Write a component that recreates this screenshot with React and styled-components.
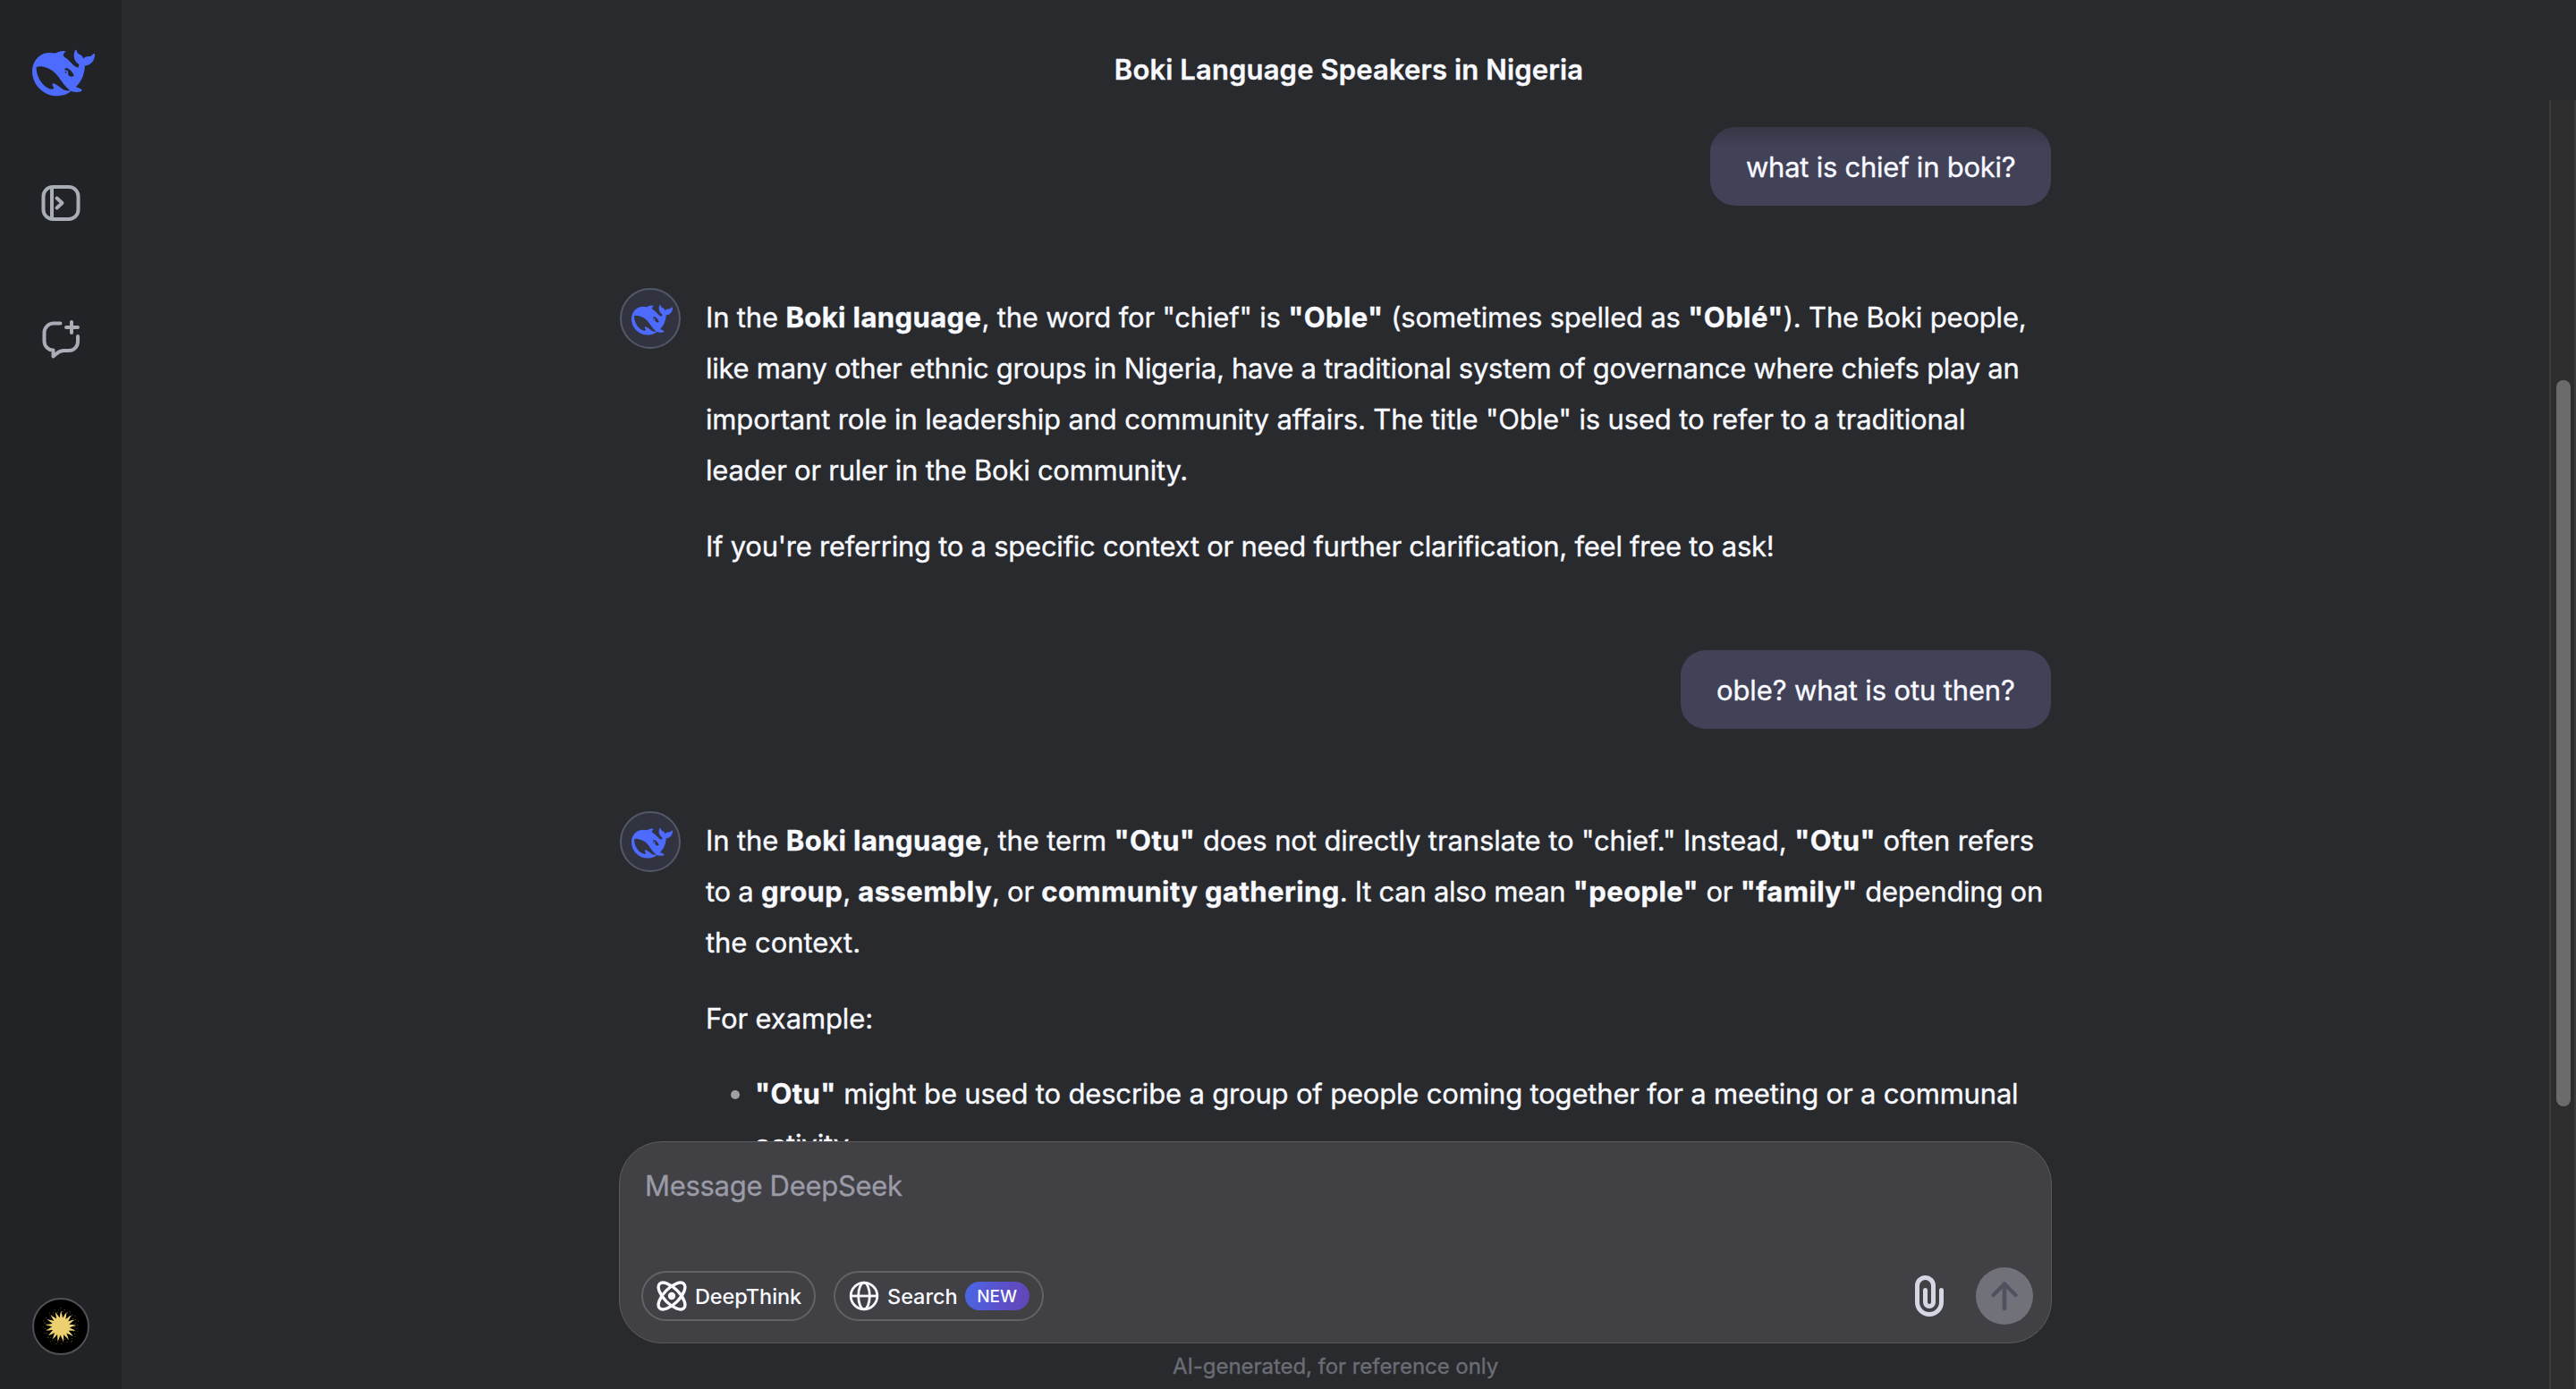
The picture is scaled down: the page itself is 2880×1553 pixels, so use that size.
import React from "react";
import styled, { createGlobalStyle } from "styled-components";

const GlobalStyle = createGlobalStyle`
	* {
		box-sizing: border-box;
	}

	body {
		margin: 0;
		background: #292a2d;
		font-family: Inter, "Liberation Sans", sans-serif;
		color: #f8faff;
		-webkit-text-stroke: 0.35px;
	}
`;

const Page = styled.div`
	display: flex;
	width: 100vw;
	height: 100vh;
	overflow: hidden;
`;

const Sidebar = styled.nav`
	display: flex;
	flex-direction: column;
	align-items: center;
	flex: 0 0 136px;
	padding: 46px 0 38px;
	background: #212327;

	svg {
		display: block;
	}
`;

const Logo = styled.div`
	padding: 1px 0 0 6px;
`;

const SideButton = styled.button`
	display: block;
	padding: 0;
	border: 0;
	background: none;
	color: #a9adb5;
	margin-top: ${props => props.$gap}px;
`;

const UserAvatar = styled.div`
	width: 64px;
	height: 64px;
	margin-top: auto;
	border: 2px solid #505154;
	border-radius: 50%;
	background: #000;
	overflow: hidden;
`;

const Main = styled.main`
	display: flex;
	flex-direction: column;
	flex: 1;
	min-width: 0;
`;

const Header = styled.header`
	position: relative;
	display: flex;
	justify-content: center;
	flex: 0 0 112px;
	padding-top: 58px;

	&::after {
		content: "";
		position: absolute;
		top: 112px;
		left: 0;
		right: 30px;
		height: 54px;
		background: linear-gradient(#292a2d, rgba(41, 42, 45, 0));
	}
`;

const Title = styled.h1`
	margin: 0;
	font-size: 31px;
	line-height: 40px;
	font-weight: 600;
	letter-spacing: ${props => props.$track}px;
	white-space: nowrap;
`;

const Body = styled.div`
	display: flex;
	flex: 1;
	min-height: 0;
`;

const Column = styled.div`
	display: flex;
	flex-direction: column;
	width: 1602px;
	margin: 0 auto;
`;

const Thread = styled.div`
	display: flex;
	flex-direction: column;
	flex: 1;
	min-height: 0;
	padding: 30px 1px 0;
	overflow: hidden;
`;

const Bubble = styled.div`
	flex: none;
	align-self: flex-end;
	width: ${props => props.$width}px;
	height: 88px;
	padding: 0 40px;
	border-radius: 28px;
	background: #414158;
	font-size: 31px;
	line-height: 90px;
	letter-spacing: ${props => props.$track}px;
	white-space: nowrap;
`;

const Answer = styled.div`
	display: flex;
	align-items: flex-start;
	flex: none;
	gap: 28px;
	margin: 92px 0 88px;
`;

const BotAvatar = styled.div`
	display: flex;
	align-items: center;
	justify-content: center;
	flex: 0 0 68px;
	height: 68px;
	padding: 3px 0 0 4px;
	border: 2px solid #525967;
	border-radius: 50%;
	background: #313340;
`;

const Content = styled.div`
	padding-top: 4px;
	font-size: 31px;
	line-height: 57px;

	p {
		margin: 0 0 28px;
	}

	p:last-child {
		margin: 0;
	}

	b {
		font-weight: 700;
		letter-spacing: 0.4px;
	}
`;

const Line = styled.span`
	display: block;
	letter-spacing: ${props => props.$track}px;
	white-space: nowrap;
`;

const Bullets = styled.ul`
	margin: -1px 0 0;
	padding: 0;
	list-style: none;

	li {
		display: flex;
		gap: 17px;
		padding-left: 28px;
	}

	li::before {
		content: "";
		width: 10px;
		height: 10px;
		margin-top: 25px;
		border-radius: 50%;
		background: #a0a0a2;
	}
`;

const Composer = styled.div`
	display: flex;
	flex-direction: column;
	justify-content: space-between;
	flex: 0 0 226px;
	padding: 26px 20px 24px 24px;
	border: 1px solid #5a5a5f;
	border-radius: 48px;
	background: #404045;
`;

const Placeholder = styled.div`
	padding-left: 4px;
	font-size: 31px;
	line-height: 46px;
	letter-spacing: ${props => props.$track}px;
	color: #9a9ba6;
`;

const Tools = styled.div`
	display: flex;
	align-items: center;
	height: 56px;
`;

const Chip = styled.button`
	display: flex;
	align-items: center;
	width: ${props => props.$width}px;
	height: 56px;
	margin-right: 20px;
	padding: 0 14px 0 15px;
	border: 2px solid #626366;
	border-radius: 28px;
	background: none;
	color: #f8faff;
	font-family: inherit;
	font-size: 23.5px;
	font-weight: 500;
	letter-spacing: ${props => props.$track}px;
	white-space: nowrap;
	-webkit-text-stroke: 0;

	svg {
		flex: none;
		margin-right: 9px;
	}
`;

const NewBadge = styled.span`
	flex: none;
	width: 72px;
	height: 32px;
	margin-left: 8px;
	border-radius: 16px;
	background: linear-gradient(100deg, #4a67e6, #5c4fc8 60%, #6345b4);
	font-size: 19px;
	line-height: 33px;
	text-align: center;
	letter-spacing: 0;
`;

const AttachButton = styled.button`
	display: block;
	margin-left: auto;
	margin-right: 36px;
	padding: 0;
	border: 0;
	background: none;
	color: #d5d8e4;

	svg {
		display: block;
	}
`;

const SendButton = styled.button`
	display: flex;
	flex: none;
	align-items: center;
	justify-content: center;
	width: 64px;
	height: 64px;
	padding: 0;
	border: 0;
	border-radius: 50%;
	background: #71717a;
	color: #50505f;
`;

const Disclaimer = styled.div`
	flex: 0 0 51px;
	padding-top: 11px;
	font-size: 24px;
	line-height: 30px;
	text-align: center;
	letter-spacing: ${props => props.$track}px;
	color: #6b6d75;
`;

const ScrollRail = styled.div`
	flex: 0 0 30px;
	padding: 313px 4px 0 6px;
	border-left: 2px solid #3b3b3b;
	border-right: 2px solid #3b3b3b;
	background: #2d2d2d;
`;

const ScrollThumb = styled.div`
	width: 16px;
	height: 812px;
	border-radius: 8px;
	background: #6b6b6b;
`;

const Whale = ({ size }) => (
	<svg width={size} height={size} viewBox="0 0 24 24" fill="#4d6bfe">
		<path d="M23.748 4.482c-.254-.124-.364.113-.512.234-.051.039-.094.09-.137.136-.372.397-.806.657-1.373.626-.829-.046-1.537.214-2.163.848-.133-.782-.575-1.248-1.247-1.548-.352-.156-.708-.311-.955-.65-.172-.241-.219-.51-.305-.774-.055-.16-.11-.323-.293-.35-.2-.031-.278.136-.356.276-.313.572-.434 1.202-.422 1.84.027 1.436.633 2.58 1.838 3.393.137.093.172.187.129.323-.082.28-.18.552-.266.833-.055.179-.137.217-.329.14a5.526 5.526 0 01-1.736-1.18c-.857-.828-1.631-1.742-2.597-2.458a11.365 11.365 0 00-.689-.471c-.985-.957.13-1.743.388-1.836.27-.098.093-.432-.779-.428-.872.004-1.67.295-2.687.684a3.055 3.055 0 01-.465.137 9.597 9.597 0 00-2.883-.102c-1.885.21-3.39 1.102-4.497 2.623C.082 8.606-.231 10.684.152 12.85c.403 2.284 1.569 4.175 3.36 5.653 1.858 1.533 3.997 2.284 6.438 2.14 1.482-.085 3.133-.284 4.994-1.86.47.234.962.327 1.78.397.63.059 1.236-.03 1.705-.128.735-.156.684-.837.419-.961-2.155-1.004-1.682-.595-2.113-.926 1.096-1.296 2.746-2.642 3.392-7.003.05-.347.007-.565 0-.845-.004-.17.035-.237.23-.256a4.173 4.173 0 001.545-.475c1.396-.763 1.96-2.015 2.093-3.517.02-.23-.004-.467-.247-.588zM11.581 18c-2.089-1.642-3.102-2.183-3.52-2.16-.392.024-.321.471-.235.763.09.288.207.486.371.739.114.167.192.416-.113.603-.673.416-1.842-.14-1.897-.167-1.361-.802-2.5-1.86-3.301-3.307-.774-1.393-1.224-2.887-1.298-4.482-.02-.386.093-.522.477-.592a4.696 4.696 0 011.529-.039c2.132.312 3.946 1.265 5.468 2.774.868.86 1.525 1.887 2.202 2.891.72 1.066 1.494 2.082 2.48 2.914.348.292.625.514.891.677-.802.09-2.14.11-3.054-.614zm1-6.44a.306.306 0 01.415-.287.302.302 0 01.2.288.306.306 0 01-.31.307.303.303 0 01-.304-.308zm3.11 1.596c-.2.081-.399.151-.59.16a1.245 1.245 0 01-.798-.254c-.274-.23-.47-.358-.552-.758a1.73 1.73 0 01.016-.588c.07-.327-.008-.537-.239-.727-.187-.156-.426-.199-.688-.199a.559.559 0 01-.254-.078c-.11-.054-.2-.19-.114-.358.028-.054.16-.186.192-.21.356-.202.767-.136 1.146.016.352.144.618.408 1.001.782.391.451.462.576.685.914.176.265.336.537.445.848.067.195-.019.354-.25.452z" />
	</svg>
);

const OpenPanelIcon = () => (
	<svg width="44" height="40" viewBox="0 0 44 40" fill="none" stroke="currentColor" strokeWidth="4">
		<rect x="2.5" y="2" width="39" height="36" rx="10.5" />
		<path d="M12 2v36" />
		<path d="M17.5 14.5l6 5.5-6 5.5" strokeLinecap="round" strokeLinejoin="round" />
	</svg>
);

const NewChatIcon = () => (
	<svg
		width="44"
		height="44"
		viewBox="0 0 44 44"
		fill="none"
		stroke="currentColor"
		strokeWidth="4"
		strokeLinecap="round"
		strokeLinejoin="round"
	>
		<path d="M21.5 4.5H14A10.5 10.5 0 0 0 3.5 15v9.5A10 10 0 0 0 13.5 34.5v7C17 39.5 18 35.5 25 35H31A10 10 0 0 0 41 25V19" />
		<path d="M34 3v12M28 9h13" />
	</svg>
);

// 17 pointed rays around a solid disc, with a ring of specks outside
const rays = Array.from({ length: 17 }, (_, i) => (i * 360) / 17);
const specks = Array.from({ length: 60 }, (_, i) => {
	const angle = i * 2.4;
	const radius = 15 + ((i * 7) % 11) * 0.55;
	return [30 + Math.cos(angle) * radius, 30 + Math.sin(angle) * radius];
});

const Sun = () => (
	<svg width="60" height="60" viewBox="0 0 60 60" fill="#ecd06f">
		{specks.map(([x, y], i) => (
			<circle key={i} cx={x} cy={y} r="0.5" opacity="0.5" />
		))}
		<circle cx="30" cy="30" r="10" />
		{rays.map(angle => (
			<path
				key={angle}
				d="M28 21.2C29.8 18.5 28.4 16.5 30.6 12.8 30.6 16.6 32.4 18.4 32 21.2z"
				transform={`rotate(${angle} 30 30)`}
			/>
		))}
	</svg>
);

const AtomIcon = () => (
	<svg width="34" height="34" viewBox="0 0 34 34" fill="none" stroke="currentColor" strokeWidth="3.4">
		<ellipse cx="17" cy="17" rx="19.2" ry="8.6" transform="rotate(45 17 17)" />
		<ellipse cx="17" cy="17" rx="19.2" ry="8.6" transform="rotate(-45 17 17)" />
		<circle cx="17" cy="17" r="4.2" fill="currentColor" stroke="none" />
	</svg>
);

const GlobeIcon = () => (
	<svg width="34" height="34" viewBox="0 0 34 34" fill="none" stroke="currentColor" strokeWidth="2.8">
		<circle cx="17" cy="17" r="14.8" />
		<ellipse cx="17" cy="17" rx="6.3" ry="14.8" />
		<path d="M2 17h30" />
	</svg>
);

const ClipIcon = () => (
	<svg width="32" height="46" viewBox="0 0 32 46" fill="none" stroke="currentColor" strokeWidth="5" strokeLinecap="round">
		<path d="M29.5 16.5v13.5a13.5 13.5 0 0 1-27 0V11.5a9 9 0 0 1 18 0V30a4.5 4.5 0 0 1-9 0V16.5" />
	</svg>
);

const ArrowIcon = () => (
	<svg width="32" height="34" viewBox="0 0 32 34" fill="none" stroke="currentColor" strokeWidth="4.5" strokeLinecap="round" strokeLinejoin="round">
		<path d="M16 31V3.5M3.5 16L16 3.5 28.5 16" />
	</svg>
);

const Bot = () => (
	<BotAvatar>
		<Whale size={46} />
	</BotAvatar>
);

const App = () => {
	return (
		<Page>
			<GlobalStyle />
			<Sidebar>
				<Logo>
					<Whale size={70} />
				</Logo>
				<SideButton $gap={90}>
					<OpenPanelIcon />
				</SideButton>
				<SideButton $gap={110}>
					<NewChatIcon />
				</SideButton>
				<UserAvatar>
					<Sun />
				</UserAvatar>
			</Sidebar>
			<Main>
				<Header>
					<Title $track={0.13}>Boki Language Speakers in Nigeria</Title>
				</Header>
				<Body>
					<Column>
						<Thread>
							<Bubble $width={381} $track={-0.25}>what is chief in boki?</Bubble>
							<Answer>
								<Bot />
								<Content>
									<p>
										<Line $track={-0.18}>
											In the <b>Boki language</b>, the word for "chief" is <b>"Oble"</b> (sometimes spelled as <b>"Oblé"</b>). The Boki people,
										</Line>
										<Line $track={-0.27}>
											like many other ethnic groups in Nigeria, have a traditional system of governance where chiefs play an
										</Line>
										<Line $track={-0.15}>
											important role in leadership and community affairs. The title "Oble" is used to refer to a traditional
										</Line>
										<Line $track={-0.24}>leader or ruler in the Boki community.</Line>
									</p>
									<p>
										<Line $track={-0.25}>
											If you're referring to a specific context or need further clarification, feel free to ask!
										</Line>
									</p>
								</Content>
							</Answer>
							<Bubble $width={414} $track={-0.13}>oble? what is otu then?</Bubble>
							<Answer>
								<Bot />
								<Content>
									<p>
										<Line $track={-0.11}>
											In the <b>Boki language</b>, the term <b>"Otu"</b> does not directly translate to "chief." Instead, <b>"Otu"</b> often refers
										</Line>
										<Line $track={-0.27}>
											to a <b>group</b>, <b>assembly</b>, or <b>community gathering</b>. It can also mean <b>"people"</b> or <b>"family"</b> depending on
										</Line>
										<Line $track={-0.05}>the context.</Line>
									</p>
									<p>
										<Line $track={-0.12}>For example:</Line>
									</p>
									<Bullets>
										<li>
											<div>
												<Line $track={-0.18}>
													<b>"Otu"</b> might be used to describe a group of people coming together for a meeting or a communal
												</Line>
												<Line $track={-0.1}>activity.</Line>
											</div>
										</li>
									</Bullets>
								</Content>
							</Answer>
						</Thread>
						<Composer>
							<Placeholder $track={-0.3}>Message DeepSeek</Placeholder>
							<Tools>
								<Chip $width={195} $track={-0.1}>
									<AtomIcon />
									DeepThink
								</Chip>
								<Chip $width={235} $track={-0.05}>
									<GlobeIcon />
									Search
									<NewBadge>NEW</NewBadge>
								</Chip>
								<AttachButton>
									<ClipIcon />
								</AttachButton>
								<SendButton>
									<ArrowIcon />
								</SendButton>
							</Tools>
						</Composer>
						<Disclaimer $track={-0.05}>AI-generated, for reference only</Disclaimer>
					</Column>
					<ScrollRail>
						<ScrollThumb />
					</ScrollRail>
				</Body>
			</Main>
		</Page>
	);
};

export default App;
